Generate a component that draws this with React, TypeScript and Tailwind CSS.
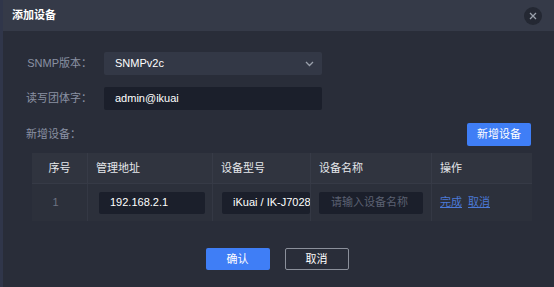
import React from "react";

const cjk = { fontFamily: '"Liberation Sans", "Noto Sans CJK SC", sans-serif' };

export default function App() {
  return (
    <div className="w-[554px] h-[287px] bg-[#292d39] flex flex-col overflow-hidden border-l-[3px] border-[#30364a]" style={cjk}>
      <div className="h-[31px] bg-[#353a48] flex items-center justify-between pl-[9px] pr-[12px] shrink-0">
        <span className="text-[11px] text-white font-bold">添加设备</span>
        <div className="w-[18px] h-[18px] rounded-full bg-[#242833] flex items-center justify-center">
          <svg width="8" height="8" viewBox="0 0 8 8">
            <path d="M1 1L7 7M7 1L1 7" stroke="#9aa0ab" strokeWidth="1.3" />
          </svg>
        </div>
      </div>
      <div className="flex flex-col pt-[21px]">
        <div className="flex items-center h-[23px]">
          <div className="w-[101px] text-right pr-[12px] text-[11px] text-[#8a91a3]">SNMP版本：</div>
          <div className="w-[218px] h-[23px] bg-[#333846] rounded-[2px] flex items-center justify-between pl-[11px] pr-[8px]">
            <span className="text-[11px] text-white">SNMPv2c</span>
            <svg width="9" height="6" viewBox="0 0 9 6">
              <path d="M1 1L4.5 4.5L8 1" stroke="#9aa0ab" strokeWidth="1.3" fill="none" />
            </svg>
          </div>
        </div>
        <div className="flex items-center h-[23px] mt-[12px]">
          <div className="w-[101px] text-right pr-[12px] text-[11px] text-[#8a91a3]">读写团体字：</div>
          <div className="w-[218px] h-[23px] bg-[#1b1f2b] rounded-[2px] flex items-center pl-[11px]">
            <span className="text-[11px] text-white">admin@ikuai</span>
          </div>
        </div>
        <div className="flex items-center justify-between h-[23px] mt-[13px] pl-[23px] pr-[23px]">
          <span className="text-[11px] text-[#8a91a3]">新增设备：</span>
          <button className="w-[64px] h-[23px] bg-[#3f7ef6] rounded-[2px] text-[11px] text-white">新增设备</button>
        </div>
        <div className="ml-[29px] mt-[7px] w-[500px] flex flex-col">
          <div className="grid grid-cols-[56px_125px_98px_121px_100px] h-[30px] bg-[#30343f] text-[11px] text-[#e6e8ec]">
            <div className="flex items-center justify-center border-r border-[#373b47]">序号</div>
            <div className="flex items-center pl-[8px] border-r border-[#373b47]">管理地址</div>
            <div className="flex items-center pl-[8px] border-r border-[#373b47]">设备型号</div>
            <div className="flex items-center pl-[8px] border-r border-[#373b47]">设备名称</div>
            <div className="flex items-center pl-[8px]">操作</div>
          </div>
          <div className="grid grid-cols-[56px_125px_98px_121px_100px] h-[38px] bg-[#2c303b] border-t border-[#363a46] text-[11px]">
            <div className="flex items-center justify-center pr-[8px] text-[#6c7282] border-r border-[#343844]">1</div>
            <div className="flex items-center pl-[11px] border-r border-[#343844]">
              <div className="w-[106px] h-[22px] bg-[#1b1f2b] rounded-[2px] flex items-center pl-[11px] text-white">192.168.2.1</div>
            </div>
            <div className="flex items-center pl-[9px] border-r border-[#343844] overflow-hidden">
              <div className="w-[89px] h-[22px] bg-[#1b1f2b] rounded-[2px] flex items-center pl-[11px] text-white whitespace-nowrap overflow-hidden">iKuai / IK-J7028</div>
            </div>
            <div className="flex items-center pl-[8px] border-r border-[#343844]">
              <div className="w-[104px] h-[22px] bg-[#1b1f2b] rounded-[2px] flex items-center pl-[12px] text-[#5b6172]">请输入设备名称</div>
            </div>
            <div className="flex items-center pl-[8px] gap-[6px] text-[#4b79d6]">
              <span className="underline">完成</span>
              <span className="underline">取消</span>
            </div>
          </div>
        </div>
        <div className="flex justify-center gap-[15px] mt-[27px] pr-[3px]">
          <button className="w-[64px] h-[22px] bg-[#3f7ef6] rounded-[2px] text-[11px] text-white">确认</button>
          <button className="w-[64px] h-[22px] border border-[#8b909b] rounded-[2px] text-[11px] text-white">取消</button>
        </div>
      </div>
    </div>
  );
}
